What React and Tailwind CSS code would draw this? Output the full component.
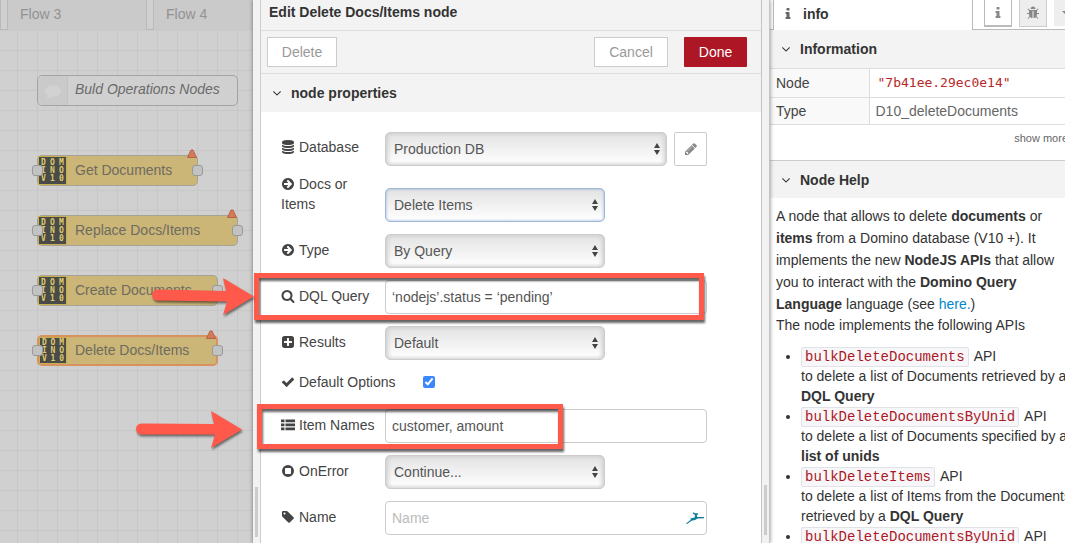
import React from "react";

const ICONS = {
  database:
    "M896 768q237 0 443-43t325-127v170q0 69-103 128t-280 93.5-385 34.5-385-34.5-280-93.5-103-128v-170q119 84 325 127t443 43zm0 768q237 0 443-43t325-127v170q0 69-103 128t-280 93.5-385 34.5-385-34.5-280-93.5-103-128v-170q119 84 325 127t443 43zm0-384q237 0 443-43t325-127v170q0 69-103 128t-280 93.5-385 34.5-385-34.5-280-93.5-103-128v-170q119 84 325 127t443 43zm0-1152q208 0 385 34.5t280 93.5 103 128v128q0 69-103 128t-280 93.5-385 34.5-385-34.5-280-93.5-103-128v-128q0-69 103-128t280-93.5 385-34.5z",
  arrowCircle:
    "M1413 896q0-27-18-45l-91-91-362-362q-18-18-45-18t-45 18l-91 91q-18 18-18 45t18 45l189 189h-502q-26 0-45 19t-19 45v128q0 26 19 45t45 19h502l-189 189q-19 19-19 45t19 45l91 91q18 18 45 18t45-18l362-362 91-91q18-18 18-45zm251 0q0 209-103 385.5t-279.5 279.5-385.5 103-385.5-103-279.5-279.5-103-385.5 103-385.5 279.5-279.5 385.5-103 385.5 103 279.5 279.5 103 385.5z",
  search:
    "M1216 832q0-185-131.5-316.5t-316.5-131.5-316.5 131.5-131.5 316.5 131.5 316.5 316.5 131.5 316.5-131.5 131.5-316.5zm512 832q0 52-38 90t-90 38q-54 0-90-38l-343-342q-179 124-399 124-143 0-273.5-55.5t-225-150-150-225-55.5-273.5 55.5-273.5 150-225 225-150 273.5-55.5 273.5 55.5 225 150 150 225 55.5 273.5q0 220-124 399l343 343q37 37 37 90z",
  plusSquare:
    "M1408 960v-128q0-26-19-45t-45-19h-320v-320q0-26-19-45t-45-19h-128q-26 0-45 19t-19 45v320h-320q-26 0-45 19t-19 45v128q0 26 19 45t45 19h320v320q0 26 19 45t45 19h128q26 0 45-19t19-45v-320h320q26 0 45-19t19-45zm256-544v960q0 119-84.5 203.5t-203.5 84.5h-960q-119 0-203.5-84.5t-84.5-203.5v-960q0-119 84.5-203.5t203.5-84.5h960q119 0 203.5 84.5t84.5 203.5z",
  check:
    "M1671 566q0 40-28 68l-724 724-136 136q-28 28-68 28t-68-28l-136-136-362-362q-28-28-28-68t28-68l136-136q28-28 68-28t68 28l294 295 656-657q28-28 68-28t68 28l136 136q28 28 28 68z",
  list: "M0 192h448v352h-448zM576 192h1216v352h-1216zM0 704h448v352h-448zM576 704h1216v352h-1216zM0 1216h448v352h-448zM576 1216h1216v352h-1216z",
  stopCircle:
    "M896 128a768 768 0 1 1 0 1536a768 768 0 1 1 0-1536zM608 512q-96 0-96 96v576q0 96 96 96h576q96 0 96-96v-576q0-96-96-96z",
  tag: "M576 448q0-53-37.5-90.5t-90.5-37.5-90.5 37.5-37.5 90.5 37.5 90.5 90.5 37.5 90.5-37.5 37.5-90.5zm1067 576q0 53-37 90l-491 492q-39 37-91 37-53 0-90-37l-715-716q-38-37-64.5-101t-26.5-117v-416q0-52 38-90t90-38h416q53 0 117 26.5t102 64.5l715 714q37 39 37 91z",
  pencil:
    "M491 1536l91-91-235-235-91 91v107h128v128h107zm523-928q0-22-22-22-10 0-17 7l-542 542q-7 7-7 17 0 22 22 22 10 0 17-7l542-542q7-7 7-17zm-54-192l416 416-832 832h-416v-416zm683 96q0 53-37 90l-166 166-416-416 166-165q36-38 90-38 53 0 91 38l235 234q37 39 37 91z",
  comment:
    "M1792 896q0 174-120 321.5t-326 233-450 85.5q-70 0-145-8-198 175-460 242-49 14-114 22-17 2-30.5-9t-17.500-29v-1q-3-4-.5-12t2-10 4.500-9.500l6-9 7-8.500 8-9q7-8 31-34.500t34.500-38 31-39.500 32.500-51 27-59 26-76q-157-89-247.500-220t-90.500-281q0-130 71-248.500t191-204.500 286-136.500 348-50.500q244 0 450 85.500t326 233 120 321.500z",
  bug: "M1696 960q0 26-19 45t-45 19h-224q0 171-67 290l208 209q19 19 19 45t-19 45q-18 19-45 19t-45-19l-198-197q-5 5-15 13t-42 28.5-65 36.5-82 29-97 13v-896h-128v896q-51 0-101.5-13.5t-87-33-66-39-43.5-32.5l-15-14-183 207q-20 21-48 21-24 0-43-16-19-18-20.5-44.5t15.5-46.5l202-227q-58-114-58-274h-224q-26 0-45-19t-19-45 19-45 45-19h224v-294l-173-173q-19-19-19-45t19-45 45-19 45 19l173 173h844l173-173q19-19 45-19t45 19 19 45-19 45l-173 173v294h224q26 0 45 19t19 45zm-480-576h-640q0-133 93.5-226.5t226.5-93.5 226.5 93.5 93.5 226.5z",
  info: "M1216 1344v128q0 26-19 45t-45 19h-512q-26 0-45-19t-19-45v-128q0-26 19-45t45-19h64v-384h-64q-26 0-45-19t-19-45v-128q0-26 19-45t45-19h384q26 0 45 19t19 45v576h64q26 0 45 19t19 45zm-128-1152v192q0 26-19 45t-45 19h-256q-26 0-45-19t-19-45v-192q0-26 19-45t45-19h256q26 0 45 19t19 45z",
  angleDown:
    "M1395 736q0 13-10 23l-466 466q-10 10-23 10t-23-10l-466-466q-10-10-10-23t10-23l50-50q10-10 23-10t23 10l393 393 393-393q10-10 23-10t23 10l50 50q10 10 10 23z",
};

function Icon({ name, className = "h-3.5 w-3.5" }) {
  return (
    <svg viewBox="0 0 1792 1792" fill="currentColor" fillRule="evenodd" className={className} aria-hidden="true">
      <path d={ICONS[name]} />
    </svg>
  );
}

/* ---------- Workspace ---------- */

function Port({ className }) {
  return (
    <span
      className={`absolute h-[11px] w-[11px] rounded-[3px] border border-[#999] bg-[#c2c2c2] ${className}`}
    />
  );
}

function FlowNode({ label, place, selected, warn }) {
  return (
    <div
      className={`absolute flex h-[31px] items-center rounded-[5px] ${place} ${
        selected ? "border-2 border-[#d9925f]" : "border border-[#a6a297]"
      } bg-[#cbb678]`}
    >
      <div
        className={`grid shrink-0 grid-cols-3 content-center justify-items-center border border-[#c9b04e] bg-[#4a4a48] font-['DejaVu_Sans_Mono',monospace] text-[8px] leading-[8px] font-bold text-[#dcca6c] ${
          selected ? "h-[27px] w-[28px]" : "h-[29px] w-[29px]"
        }`}
      >
        {"DOMINOV10".split("").map((c, i) => (
          <span key={i}>{c}</span>
        ))}
      </div>
      <span className="pb-0.5 pl-2 text-sm whitespace-nowrap text-[#6e6b5f]">{label}</span>
      <Port className={selected ? "top-2 -left-[7px]" : "top-[9px] -left-[6px]"} />
      <Port className={selected ? "top-2 -right-[7px]" : "top-[9px] -right-[6px]"} />
      {warn && (
        <svg viewBox="0 0 10 9" className="absolute -top-[7px] right-0 h-[9px] w-[10px]" aria-hidden="true">
          <path d="M4 1h2l3.500 7.500h-9z" fill="#d27c58" stroke="#b8604a" strokeWidth="1" strokeLinejoin="round" />
        </svg>
      )}
    </div>
  );
}

function Workspace() {
  return (
    <section className="flex min-w-0 flex-1 flex-col overflow-hidden bg-[#d0d0d0]">
      <nav className="flex h-[31px] shrink-0 bg-[#cacaca] text-sm text-[#929292]">
        <div className="mb-px w-2 shrink-0 border border-t-0 border-[#b9b9b9] bg-[#d0d0d0]" />
        <a href="#flow3" className="w-[138px] shrink-0 pt-1 pl-3">
          Flow 3
        </a>
        <div className="mb-px w-2 shrink-0 border border-t-0 border-[#b9b9b9] bg-[#d0d0d0]" />
        <a href="#flow4" className="shrink-0 pt-1 pl-3">
          Flow 4
        </a>
      </nav>
      <div className="relative flex-1 bg-[linear-gradient(to_right,#c7c7c7_1px,transparent_1px),linear-gradient(to_bottom,#c7c7c7_1px,transparent_1px)] bg-[length:20px_20px] bg-[position:17px_19px]">
        <div className="absolute top-[44px] left-[37px] flex h-[31px] w-[201px] overflow-hidden rounded-[5px] border border-[#a3a3a3] bg-[#d0d0d0]">
          <div className="flex w-[30px] shrink-0 items-center justify-center border-r border-[#c4c4c4] bg-[#cacaca] text-[#d2d2d2]">
            <Icon name="comment" className="h-4 w-4" />
          </div>
          <span className="pt-[3px] pl-[7px] text-sm whitespace-nowrap text-[#6a6a6a] italic">
            Buld Operations Nodes
          </span>
        </div>
        <FlowNode label="Get Documents" place="left-[37px] top-[124px] w-[161px]" warn />
        <FlowNode label="Replace Docs/Items" place="left-[37px] top-[184px] w-[201px]" warn />
        <FlowNode label="Create Documents" place="left-[37px] top-[244px] w-[181px]" />
        <FlowNode label="Delete Docs/Items" place="left-[37px] top-[304px] w-[181px]" selected warn />
      </div>
    </section>
  );
}

/* ---------- Edit dialog ---------- */

function Select({ id, value, width, focused }) {
  return (
    <div className={`relative h-[34px] ${width}`}>
      <select
        id={id}
        defaultValue={value}
        className={`h-full w-full appearance-none rounded-[5px] border bg-linear-to-b from-[#e3e3e3] to-white pl-2 text-sm text-[#555] outline-none ${
          focused
            ? "border-[#9fb6d6] shadow-[inset_0_0_3px_#8fb0dc]"
            : "border-[#ccc] shadow-[inset_2px_0_4px_#d0d0d0,inset_-2px_0_4px_#d0d0d0]"
        }`}
      >
        <option>{value}</option>
      </select>
      <svg
        viewBox="0 0 6 12"
        className="pointer-events-none absolute top-[11px] right-[7px] h-3 w-1.5"
        fill="#444"
        aria-hidden="true"
      >
        <path d="M3 0l3 5h-6zM3 12l3-5h-6z" />
      </svg>
    </div>
  );
}

function Row({ icon, label, id, pad = "pt-1.5", className = "items-start", children }) {
  return (
    <div className={`flex ${className}`}>
      <label htmlFor={id} className={`w-[104px] shrink-0 text-sm text-[#444] ${pad}`}>
        <Icon name={icon} className="mr-1 mb-[3px] inline-block h-3.5 w-3.5" />
        {label}
      </label>
      {children}
    </div>
  );
}

const inputClass =
  "h-[34px] w-full rounded border border-[#ccc] bg-white px-[6px] text-sm text-[#555] outline-none placeholder:text-[#bbb]";

function SplitBar({ className, handle }) {
  return (
    <div className={`flex shrink-0 flex-col items-center justify-end bg-[#f2f2f2] ${className}`}>
      <span className={`h-[50px] w-[3px] bg-[#ccc] ${handle}`} />
    </div>
  );
}

function SectionTitle({ children, className = "" }) {
  return (
    <h2 className={`flex h-[38px] items-center bg-[#f3f3f3] text-sm font-bold text-[#333] ${className}`}>
      <Icon name="angleDown" className="mx-px h-3.5 w-3.5" />
      <span className="pl-1.5">{children}</span>
    </h2>
  );
}

function EditDialog() {
  return (
    <section className="relative flex w-[517px] shrink-0 shadow-[0_0_4px_rgba(0,0,0,0.45)]">
      <SplitBar className="w-2 border-r border-[#ccc]" handle="mb-1.5" />
      <form className="flex min-w-0 flex-1 flex-col bg-white" onSubmit={(e) => e.preventDefault()}>
        <h1 className="h-[31px] shrink-0 border-b border-[#ddd] bg-[#f3f3f3] pt-0.5 pl-2 text-sm font-bold text-[#333]">
          Edit Delete Docs/Items node
        </h1>
        <div className="flex h-[43px] shrink-0 items-center border-b border-[#ddd] bg-[#f3f3f3] pr-3.5 pl-1.5 text-sm">
          <button type="button" className="h-[30px] w-[70px] border border-[#ccc] bg-white text-[#999]">
            Delete
          </button>
          <div className="flex-1" />
          <button type="button" className="mr-4 h-[30px] w-[74px] border border-[#ccc] bg-white text-[#999]">
            Cancel
          </button>
          <button type="submit" className="h-[30px] w-[63px] rounded-[1px] bg-[#ad1625] text-white">
            Done
          </button>
        </div>
        <SectionTitle className="shrink-0 pl-2">node properties</SectionTitle>
        <div className="flex w-[446px] flex-col gap-3 pt-5 pl-5">
          <Row icon="database" label="Database" id="db" pad="pt-[5px]">
            <Select id="db" value="Production DB" width="flex-1" />
            <button
              type="button"
              aria-label="Edit database"
              className="ml-[7px] flex h-[34px] w-[33px] items-center justify-center rounded-[2px] border border-[#ccc] text-[#888]"
            >
              <Icon name="pencil" />
            </button>
          </Row>
          <Row icon="arrowCircle" label="Docs or Items" id="kind" pad="pb-2 pr-5" className="-mt-1 items-end">
            <Select id="kind" value="Delete Items" width="w-[220px]" focused />
          </Row>
          <Row icon="arrowCircle" label="Type" id="type">
            <Select id="type" value="By Query" width="w-[220px]" />
          </Row>
          <Row icon="search" label="DQL Query" id="dql">
            <input id="dql" className={inputClass} defaultValue="‘nodejs’.status = ‘pending’" />
          </Row>
          <Row icon="plusSquare" label="Results" id="results">
            <Select id="results" value="Default" width="w-[220px]" />
          </Row>
          <div className="flex h-[25px] items-start">
            <label htmlFor="defaults" className="w-[142px] text-sm text-[#444]">
              <Icon name="check" className="mr-1 mb-[3px] inline-block h-3.5 w-3.5" />
              Default Options
            </label>
            <input id="defaults" type="checkbox" defaultChecked className="mt-1 h-3 w-3 accent-[#3b88fd]" />
          </div>
          <Row icon="list" label="Item Names" id="items">
            <input id="items" className={inputClass} defaultValue="customer, amount" />
          </Row>
          <Row icon="stopCircle" label="OnError" id="onerror">
            <Select id="onerror" value="Continue..." width="w-[220px]" />
          </Row>
          <Row icon="tag" label="Name" id="name">
            <div className="relative flex-1">
              <input id="name" className={inputClass} placeholder="Name" />
              <svg viewBox="0 0 18 12" className="absolute top-[11px] right-[3px] h-3 w-[18px]" aria-hidden="true">
                <path
                  d="M0 11.500L4.800 7.800L4.300 6.600L8.700 5.600L9 3L6.800 1.600L7.500 0.300L9 1.300L12 1.200L12.200 2.200L10.800 3L11.300 4.900L18 5V6.200L11.500 6.500L9 7.900L5.500 8.800L1 12Z"
                  fill="#0e7d95"
                />
              </svg>
            </div>
          </Row>
        </div>
      </form>
      <SplitBar className="w-[9px] border-x border-[#c4c4c4]" handle="mb-2" />
    </section>
  );
}

/* ---------- Sidebar ---------- */

function Api({ name, children }) {
  return (
    <li>
      <code className="mr-[5px] rounded-[2px] border border-[#e1e1e8] bg-[#f7f7f9] px-[3px] py-px font-['Liberation_Mono',monospace] text-sm leading-4 text-[#ad1625]">
        {name}
      </code>
      API
      <br />
      {children}
    </li>
  );
}

function Sidebar() {
  return (
    <aside className="w-[295px] shrink-0 overflow-hidden bg-white text-sm text-[#333]">
      <div className="w-[312px]">
        <div className="flex h-[30px] bg-white">
          <div className="w-[3px] border-b border-[#bbb]" />
          <div className="flex w-[200px] items-center border-x border-[#bbb] pb-0.5 pl-[7px] font-bold">
            <Icon name="info" className="mr-2 h-3.5 w-3.5 text-[#666]" />
            <span>info</span>
          </div>
          <div className="flex flex-1 gap-[7px] border-b border-[#bbb] pl-[11px] text-[#888]">
            <button
              type="button"
              aria-label="Info"
              className="flex h-[27px] w-7 items-center justify-center border border-t-0 border-b-2 border-[#bbb] bg-white"
            >
              <Icon name="info" />
            </button>
            <button
              type="button"
              aria-label="Debug"
              className="flex h-[27px] w-7 items-center justify-center border border-t-0 border-[#ccc] bg-[#eee]"
            >
              <Icon name="bug" />
            </button>
            <button type="button" aria-label="More" className="flex h-[26px] w-7 items-center bg-[#eee] pl-2">
              <svg viewBox="0 0 8 4" className="h-1 w-2" fill="currentColor" aria-hidden="true">
                <path d="M0 0h8l-4 4z" />
              </svg>
            </button>
          </div>
        </div>
        <SectionTitle className="pl-2">Information</SectionTitle>
        <table className="w-full border-collapse text-left">
          <tbody>
            <tr className="h-[29px] border-y border-[#ddd]">
              <th className="w-[99px] border-r border-[#ddd] bg-[#f9f9f9] pl-1.5 font-normal text-[#444]">Node</th>
              <td className="pl-2 font-['DejaVu_Sans_Mono',monospace] text-[13px] text-[#b72828]">
                "7b41ee.29ec0e14"
              </td>
            </tr>
            <tr className="h-[27px] border-b border-[#ddd]">
              <th className="border-r border-[#ddd] bg-[#f9f9f9] pl-1.5 font-normal text-[#444]">Type</th>
              <td className="pl-1.5 text-[#666]">D10_deleteDocuments</td>
            </tr>
          </tbody>
        </table>
        <div className="flex h-[35px] justify-end pt-[5px] pr-3.5">
          <a href="#more" className="text-[11px] leading-4 text-[#666]">
            show more
          </a>
        </div>
        <SectionTitle className="border-t border-[#ccc] pl-2">Node Help</SectionTitle>
        <div className="pt-[7px] pl-1.5">
          <p className="pr-2 leading-[22px]">
            A node that allows to delete <b>documents</b> or <b>items</b> from a Domino database (V10 +). It implements
            the new <b>NodeJS APIs</b> that allow you to interact with the <b>Domino Query Language</b> language (see{" "}
            <a href="#docs" className="text-[#0088cc]">
              here.
            </a>
            )
          </p>
          <p>The node implements the following APIs</p>
          <ul className="list-disc pt-[11px] pl-[25px]">
            <Api name="bulkDeleteDocuments">
              to delete a list of Documents retrieved by a <b>DQL Query</b>
            </Api>
            <Api name="bulkDeleteDocumentsByUnid">
              to delete a list of Documents specified by a <b>list of unids</b>
            </Api>
            <Api name="bulkDeleteItems">
              to delete a list of Items from the Documents retrieved by a <b>DQL Query</b>
            </Api>
            <Api name="bulkDeleteDocumentsByUnid">
              to delete a list of Items from the Documents specified by a <b>list of unids</b>
            </Api>
          </ul>
        </div>
      </div>
    </aside>
  );
}

/* ---------- Callouts drawn over the editor ---------- */

const ARROWS = {
  short:
    "M9.500 12.500L78 14L75 1L106 19.500L75 38L79 24.500L9.500 23.500A5.500 5.500 0 0 1 9.500 12.500Z",
  long: "M5.500 13.500L78 14L75 1L106 19.500L75 38L79 24.500L5.500 24.500A5.500 5.500 0 0 1 5.500 13.500Z",
};

function Callout({ box, arrow, shape }) {
  return (
    <>
      <div
        className={`pointer-events-none absolute border-[5px] border-[#ff594b] drop-shadow-[1px_3px_1px_rgba(0,0,0,0.6)] ${box}`}
      />
      <svg
        viewBox="0 0 106 40"
        className={`pointer-events-none absolute h-10 w-[106px] drop-shadow-[1px_2px_1px_rgba(0,0,0,0.5)] ${arrow}`}
        aria-hidden="true"
      >
        <path d={ARROWS[shape]} fill="#ff594b" />
      </svg>
    </>
  );
}

export default function App() {
  return (
    <main className="relative flex h-screen overflow-hidden font-['Liberation_Sans',Arial,sans-serif]">
      <Workspace />
      <div className="relative z-10 flex shrink-0">
        <EditDialog />
        <Sidebar />
        <Callout box="left-[1px] top-[273px] h-[47px] w-[450px]" arrow="-left-[105px] top-[277px]" shape="short" />
        <Callout box="left-[4px] top-[404px] h-[45px] w-[306px]" arrow="-left-[117px] top-[410px]" shape="long" />
      </div>
    </main>
  );
}
